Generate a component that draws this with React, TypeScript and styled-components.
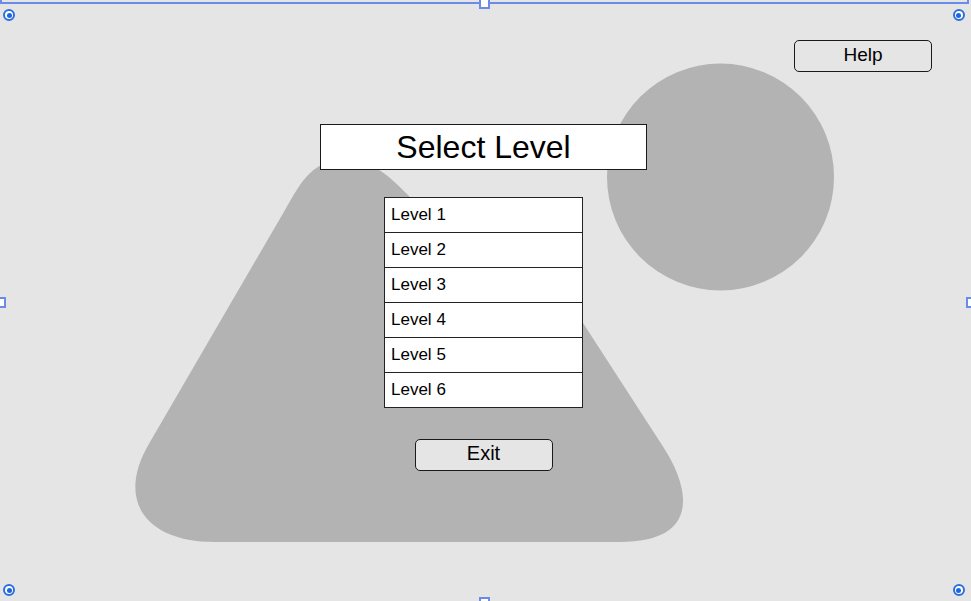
import React from "react";
import styled, { createGlobalStyle } from "styled-components";

const GlobalStyle = createGlobalStyle`
  html, body { margin: 0; padding: 0; background: #e5e5e5; }
  body { font-family: "Liberation Sans", Arial, sans-serif; }
  * { box-sizing: border-box; }
`;

const Canvas = styled.div`
  position: relative;
  width: 971px;
  height: 601px;
  overflow: hidden;
  background: #e5e5e5;
  font-family: "Liberation Sans", Arial, sans-serif;
  color: #000;
`;

const Shapes = styled.svg`
  position: absolute;
  inset: 0;
  width: 971px;
  height: 601px;
  z-index: 0;
`;

const Content = styled.div`
  position: relative;
  z-index: 1;
  display: flex;
  flex-direction: column;
`;

const TopBar = styled.div`
  display: flex;
  justify-content: flex-end;
  padding: 40px 39px 0 0;
`;

const Button = styled.button<{ $size: number }>`
  width: 138px;
  height: 32px;
  border: 1px solid #1a1a1a;
  border-radius: 5px;
  background: #e5e5e5;
  font-family: "Liberation Sans", Arial, sans-serif;
  font-size: ${(p) => p.$size}px;
  color: #000;
  display: flex;
  align-items: center;
  justify-content: center;
  padding: 0 0 3px 0;
  margin: 0;
  cursor: pointer;
`;

const Main = styled.div`
  display: flex;
  flex-direction: column;
  align-items: center;
  gap: 27px;
  margin-top: 52px;
  padding-right: 4px;
`;

const Title = styled.div`
  width: 327px;
  height: 46px;
  background: #fff;
  border: 1px solid #1a1a1a;
  display: flex;
  align-items: center;
  justify-content: center;
  font-size: 32px;
  line-height: 1;
`;

const List = styled.div`
  width: 199px;
  display: flex;
  flex-direction: column;
  border: 1px solid #222;
  border-top: none;
  background: #fff;
  margin-bottom: 4px;
`;

const Row = styled.div`
  height: 35px;
  border-top: 1px solid #222;
  display: flex;
  align-items: center;
  padding-left: 6px;
  font-size: 17px;
`;

const SelectionFrame = styled.div`
  position: absolute;
  left: 0;
  top: 0;
  width: 969px;
  height: 4px;
  border: 2px solid #6a8ce8;
  border-top: none;
  z-index: 2;
`;

const SquareHandle = styled.div<{ $x: number; $y: number }>`
  position: absolute;
  left: ${(p) => p.$x - 5.5}px;
  top: ${(p) => p.$y - 5.5}px;
  width: 11px;
  height: 11px;
  background: #fff;
  border: 2px solid #6a8ce8;
  z-index: 3;
`;

const RoundHandle = styled.div<{ $x: number; $y: number }>`
  position: absolute;
  left: ${(p) => p.$x - 6}px;
  top: ${(p) => p.$y - 6}px;
  width: 12px;
  height: 12px;
  border-radius: 50%;
  border: 2px solid #2a6fe0;
  background: #fff;
  display: flex;
  align-items: center;
  justify-content: center;
  z-index: 3;
  &::after {
    content: "";
    width: 5px;
    height: 5px;
    border-radius: 50%;
    background: #1d66e0;
  }
`;

const levels = [1, 2, 3, 4, 5, 6];

const squareHandles = [
  { x: 484, y: 3 },
  { x: 0, y: 302 },
  { x: 971, y: 302 },
  { x: 484, y: 602 },
];

const roundHandles = [
  { x: 9, y: 15 },
  { x: 958.5, y: 15 },
  { x: 9, y: 590 },
  { x: 958.5, y: 590 },
];

export default function App() {
  return (
    <>
      <GlobalStyle />
      <Canvas>
        <Shapes viewBox="0 0 971 601">
          <path
            d="M 583 323 L 425 210 C 400 192 385 160 343 160 C 310 160 298 188 285 210 L 150 442 C 115 500 145 542 215 542 L 620 542 C 695 542 695 495 662 445 Z"
            fill="#b3b3b3"
          />
          <circle cx="720.5" cy="177" r="113.5" fill="#b3b3b3" />
        </Shapes>
        <Content>
          <TopBar>
            <Button $size={19}>Help</Button>
          </TopBar>
          <Main>
            <Title>Select Level</Title>
            <List>
              {levels.map((n) => (
                <Row key={n}>Level {n}</Row>
              ))}
            </List>
            <Button $size={20}>Exit</Button>
          </Main>
        </Content>
        <SelectionFrame />
        {squareHandles.map((h, i) => (
          <SquareHandle key={`s${i}`} $x={h.x} $y={h.y} />
        ))}
        {roundHandles.map((h, i) => (
          <RoundHandle key={`r${i}`} $x={h.x} $y={h.y} />
        ))}
      </Canvas>
    </>
  );
}
